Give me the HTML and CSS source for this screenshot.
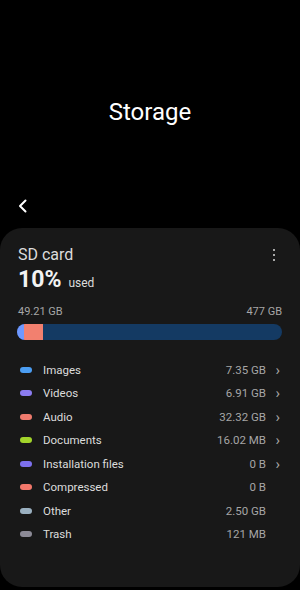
FILE: index.html
```html
<!DOCTYPE html>
<html lang="en">
<head>
    <meta charset="UTF-8">
    <meta name="viewport" content="width=device-width, initial-scale=1.0">
    <title>Storage</title>
    <link rel="stylesheet" href="styles.css">
</head>
<body>

    <header class="top">
        <h1>Storage</h1>
    </header>

    <div class="toolbar">
        <button class="back" aria-label="Back">
            <svg width="12" height="14" viewBox="0 0 12 14">
                <path d="M8.5 1.5 L3 7 L8.5 12.5" fill="none" stroke="#fff" stroke-width="2" stroke-linecap="round" stroke-linejoin="round"/>
            </svg>
        </button>
    </div>

    <section class="card">
        <div class="card-head">
            <h2>SD card</h2>
            <span class="more"><i></i><i></i><i></i></span>
        </div>
        <p class="used"><strong>10%</strong> <span>used</span></p>

        <div class="bar-labels">
            <span>49.21 GB</span>
            <span>477 GB</span>
        </div>
        <div class="bar">
            <div class="seg seg-images" style="width: 7px"></div>
            <div class="seg seg-audio" style="width: 19px"></div>
        </div>

        <!-- Categorie -->
        <ul class="list">
            <li><i class="dot" style="background:#4b9df2"></i><span class="name">Images</span><span class="size">7.35 GB</span><span class="arrow">›</span></li>
            <li><i class="dot" style="background:#8b7cf0"></i><span class="name">Videos</span><span class="size">6.91 GB</span><span class="arrow">›</span></li>
            <li><i class="dot" style="background:#ef7b6d"></i><span class="name">Audio</span><span class="size">32.32 GB</span><span class="arrow">›</span></li>
            <li><i class="dot" style="background:#a2d42b"></i><span class="name">Documents</span><span class="size">16.02 MB</span><span class="arrow">›</span></li>
            <li><i class="dot" style="background:#7d70ee"></i><span class="name">Installation files</span><span class="size">0 B</span><span class="arrow">›</span></li>
            <li><i class="dot" style="background:#f2776a"></i><span class="name">Compressed</span><span class="size">0 B</span><span class="arrow"></span></li>
            <li><i class="dot" style="background:#9ab0c0"></i><span class="name">Other</span><span class="size">2.50 GB</span><span class="arrow"></span></li>
            <li><i class="dot" style="background:#8c8a96"></i><span class="name">Trash</span><span class="size">121 MB</span><span class="arrow"></span></li>
        </ul>
    </section>

</body>
</html>
```

FILE: styles.css
```css
body {
    font-family: Roboto, "Noto Sans", sans-serif;
    background-color: #000;
    color: #e6e6e6;
    margin: 0;
    padding: 0;
    width: 300px;
    height: 590px;
    overflow: hidden;
}
.top {
    height: 190px;
    display: flex;
    align-items: center;
    justify-content: center;
    padding-top: 34px;
    box-sizing: border-box;
}
.top h1 {
    margin: 0;
    font-size: 24px;
    font-weight: 400;
    color: #fff;
}
.toolbar {
    height: 39px;
    margin-bottom: -9px;
    padding-left: 16px;
}
.back {
    background: none;
    border: none;
    padding: 0;
    margin-top: 8px;
    width: 14px;
    height: 16px;
    display: flex;
    align-items: center;
    justify-content: center;
}
.card {
    background-color: #181818;
    border-radius: 22px;
    height: 359px;
    padding: 17px 18px 0 18px;
    box-sizing: border-box;
}
.card-head {
    display: flex;
    justify-content: space-between;
    align-items: center;
}
.card-head h2 {
    margin: 0;
    font-size: 16px;
    font-weight: 400;
    line-height: 20px;
    color: #dcdcdc;
}
.more {
    display: flex;
    flex-direction: column;
    gap: 3px;
    margin-right: 7px;
}
.more i {
    display: block;
    width: 2px;
    height: 2px;
    background-color: #a8a8a8;
}
.used {
    margin: 1px 0 0 0;
    line-height: 28px;
    display: flex;
    align-items: baseline;
    gap: 7px;
}
.used strong {
    font-size: 23px;
    font-weight: 700;
    color: #f2f2f2;
}
.used span {
    font-size: 12px;
    color: #dcdcdc;
}
.bar-labels {
    display: flex;
    justify-content: space-between;
    font-size: 11px;
    color: #a6a6a6;
    margin-top: 8px;
    line-height: 14px;
}
.bar {
    display: flex;
    height: 16px;
    border-radius: 8px;
    overflow: hidden;
    background-color: #143a63;
    margin-top: 5px;
    margin-left: -1px;
}
.seg-images {
    background-color: #6f98ff;
}
.seg-audio {
    background-color: #f2806f;
}
.list {
    list-style: none;
    margin: 18px 0 0 0;
    padding: 0;
}
.list li {
    display: flex;
    align-items: center;
    height: 23.5px;
    font-size: 11.5px;
}
.dot {
    display: block;
    width: 12px;
    height: 6px;
    border-radius: 3px;
    margin-left: 2px;
    margin-right: 11px;
}
.name {
    flex: 1;
    color: #dcdcdc;
}
.size {
    color: #a6a6a6;
}
.arrow {
    width: 14px;
    text-align: right;
    color: #a6a6a6;
    font-size: 15px;
    line-height: 14px;
    margin-right: 2px;
}
```
